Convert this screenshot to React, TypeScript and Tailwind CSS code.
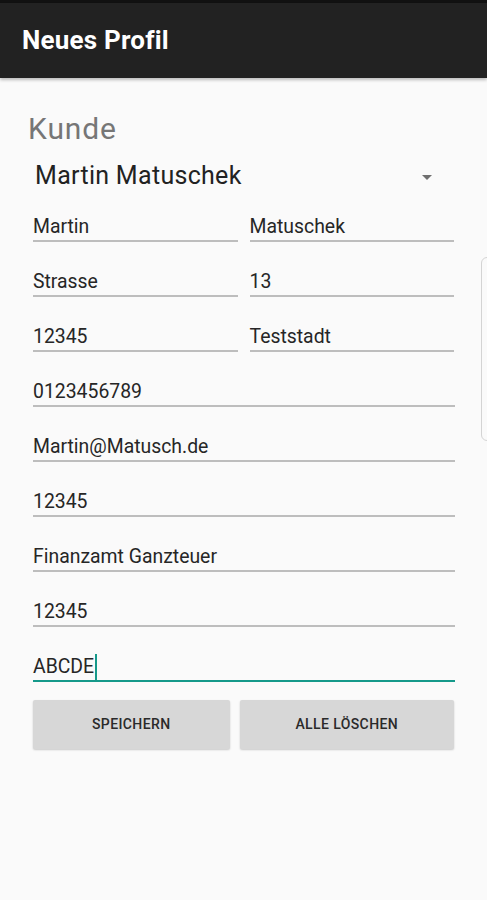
import React from 'react';

const font = { fontFamily: 'Roboto, "Noto Sans", sans-serif' };

interface FieldProps {
  value: string;
  className?: string;
  active?: boolean;
}

function Field({ value, className = '', active = false }: FieldProps) {
  return (
    <div
      className={`h-[28px] border-b-2 ${active ? 'border-[#15998a]' : 'border-[#bdbdbd]'} ${className}`}
    >
      <div className="flex items-center text-[19.4px] leading-[26px] text-[#262626]">
        <span>{value}</span>
        {active && <span className="ml-[1px] inline-block h-[26px] w-[2px] bg-[#15998a]" />}
      </div>
    </div>
  );
}

const pairs: [string, string][] = [
  ['Martin', 'Matuschek'],
  ['Strasse', '13'],
  ['12345', 'Teststadt'],
];

const singles = ['0123456789', 'Martin@Matusch.de', '12345', 'Finanzamt Ganzteuer', '12345'];

export default function App() {
  return (
    <div className="relative min-h-[900px] w-[487px] overflow-hidden bg-[#fafafa]" style={font}>
      <div className="h-[3px] bg-[#111111]" />
      <div className="flex h-[75px] items-center bg-[#222222] px-[22px] shadow-[0_2px_3px_rgba(0,0,0,0.25)]">
        <h1 className="text-[26px] font-bold tracking-[0.2px] text-white">Neues Profil</h1>
      </div>

      <div className="px-[33px] pt-[33px]">
        <div className="-ml-[5px] text-[30px] leading-[35px] tracking-[0.9px] text-[#767676]">Kunde</div>

        <div className="mt-[15px] flex h-[30px] items-center justify-between pl-[2px] pr-[22px]">
          <span className="text-[25px] leading-[30px] tracking-[0.3px] text-[#222222]">Martin Matuschek</span>
          <svg width="10" height="5" viewBox="0 0 10 5" className="mt-[3px]">
            <path d="M0 0 L10 0 L5 5 Z" fill="#6f6f6f" />
          </svg>
        </div>

        <div className="mt-[23px] flex flex-col gap-[27px]">
          {pairs.map(([a, b], i) => (
            <div key={i} className="flex gap-[12px]">
              <Field value={a} className="w-[205px]" />
              <Field value={b} className="w-[205px]" />
            </div>
          ))}
          {singles.map((v, i) => (
            <Field key={i} value={v} className="w-[422px]" />
          ))}
          <Field value="ABCDE" className="w-[422px]" active />
        </div>

        <div className="mt-[18px] flex gap-[10px]">
          <button className="h-[49px] w-[197px] rounded-[2px] bg-[#d7d7d7] text-[14px] font-medium tracking-[0.4px] text-[#2a2a2a] shadow-[0_1px_2px_rgba(0,0,0,0.2)]">
            SPEICHERN
          </button>
          <button className="h-[49px] w-[215px] rounded-[2px] bg-[#d7d7d7] text-[14px] font-medium tracking-[0.4px] text-[#2a2a2a] shadow-[0_1px_2px_rgba(0,0,0,0.2)]">
            ALLE LÖSCHEN
          </button>
        </div>
      </div>

      <div className="absolute left-[481px] top-[257px] h-[184px] w-[12px] rounded-l-[6px] border border-[#d4d4d4] bg-[#fafafa]" />
    </div>
  );
}
